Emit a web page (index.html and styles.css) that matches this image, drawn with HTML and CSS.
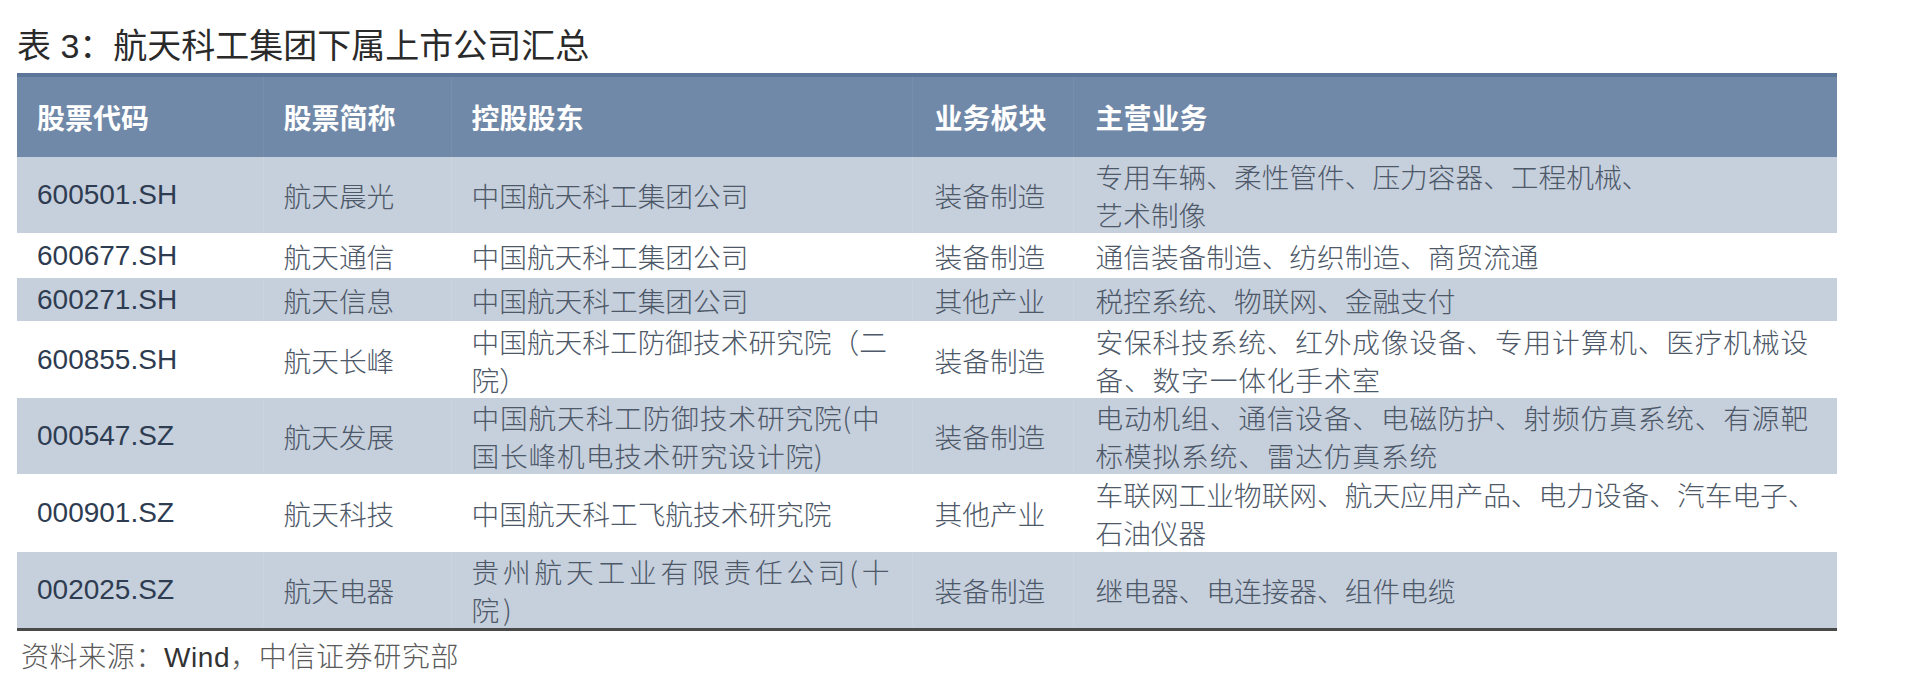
FILE: index.html
```html
<!DOCTYPE html>
<html lang="zh-CN">
<head>
<meta charset="utf-8">
<title>表 3：航天科工集团下属上市公司汇总</title>
<link rel="stylesheet" href="styles.css">
</head>
<body>
<div class="page">
  <div class="title">表 3：航天科工集团下属上市公司汇总</div>
  <table class="tbl">
    <colgroup>
      <col class="c1"><col class="c2"><col class="c3"><col class="c4"><col class="c5">
    </colgroup>
    <thead>
      <tr>
        <th>股票代码</th>
        <th>股票简称</th>
        <th>控股股东</th>
        <th class="p4">业务板块</th>
        <th class="p5">主营业务</th>
      </tr>
    </thead>
    <tbody>
      <tr class="gray h76">
        <td class="code">600501.SH</td>
        <td>航天晨光</td>
        <td>中国航天科工集团公司</td>
        <td class="p4">装备制造</td>
        <td class="p5">专用车辆、柔性管件、压力容器、工程机械、<br>艺术制像</td>
      </tr>
      <tr class="white h45">
        <td class="code">600677.SH</td>
        <td>航天通信</td>
        <td>中国航天科工集团公司</td>
        <td class="p4">装备制造</td>
        <td class="p5">通信装备制造、纺织制造、商贸流通</td>
      </tr>
      <tr class="gray h43">
        <td class="code">600271.SH</td>
        <td>航天信息</td>
        <td>中国航天科工集团公司</td>
        <td class="p4">其他产业</td>
        <td class="p5">税控系统、物联网、金融支付</td>
      </tr>
      <tr class="white h77">
        <td class="code">600855.SH</td>
        <td>航天长峰</td>
        <td>中国航天科工防御技术研究院（二<br>院）</td>
        <td class="p4">装备制造</td>
        <td class="p5 sp1">安保科技系统、红外成像设备、专用计算机、医疗机械设<br>备、数字一体化手术室</td>
      </tr>
      <tr class="gray h76">
        <td class="code">000547.SZ</td>
        <td>航天发展</td>
        <td class="sp1">中国航天科工防御技术研究院(中<br>国长峰机电技术研究设计院)</td>
        <td class="p4">装备制造</td>
        <td class="p5 sp1">电动机组、通信设备、电磁防护、射频仿真系统、有源靶<br>标模拟系统、雷达仿真系统</td>
      </tr>
      <tr class="white h78">
        <td class="code">000901.SZ</td>
        <td>航天科技</td>
        <td>中国航天科工飞航技术研究院</td>
        <td class="p4">其他产业</td>
        <td class="p5">车联网工业物联网、航天应用产品、电力设备、汽车电子、<br>石油仪器</td>
      </tr>
      <tr class="gray h75 last">
        <td class="code">002025.SZ</td>
        <td>航天电器</td>
        <td class="sp3">贵州航天工业有限责任公司(十<br>院)</td>
        <td class="p4">装备制造</td>
        <td class="p5">继电器、电连接器、组件电缆</td>
      </tr>
    </tbody>
  </table>
  <div class="source">资料来源：<span class="wind">Wind</span>，中信证券研究部</div>
</div>
</body>
</html>
```
FILE: styles.css
```css
html, body {
  margin: 0;
  padding: 0;
  background: #ffffff;
}

body {
  font-family: "Liberation Sans", "Noto Sans CJK SC", sans-serif;
  color: #333;
}

.page {
  padding: 26px 0 0 17px;
  width: 1820px;
}

.title {
  font-family: "Liberation Sans", "Noto Sans CJK SC", sans-serif;
  font-size: 34px;
  line-height: 40px;
  height: 40px;
  color: #2a2a2a;
  margin-bottom: 7px;
  white-space: nowrap;
}

.tbl {
  width: 1820px;
  border-collapse: collapse;
  table-layout: fixed;
}

.c1 { width: 246px; }
.c2 { width: 188px; }
.c3 { width: 461px; }
.c4 { width: 161px; }
.c5 { width: 764px; }

.tbl th {
  height: 80px;
  background: #7189a8;
  border-top: 4px solid #5b7698;
  color: #ffffff;
  font-family: "Noto Sans CJK SC", sans-serif;
  font-weight: bold;
  font-size: 28px;
  text-align: left;
  vertical-align: middle;
  padding: 0 0 0 20px;
  white-space: nowrap;
}

.tbl th + th {
  border-left: 1px solid rgba(255, 255, 255, 0.05);
}

.tbl td {
  font-family: "Noto Sans CJK SC", sans-serif;
  font-weight: 300;
  font-size: 27.7px;
  line-height: 38px;
  color: #4d5868;
  text-align: left;
  vertical-align: middle;
  padding: 0 0 0 20px;
  white-space: nowrap;
}

.tbl td + td {
  border-left: 1px solid rgba(255, 255, 255, 0.10);
}

.tbl .p4 { padding-left: 22px; }
.tbl .p5 { padding-left: 22px; }

.tbl td.code {
  font-family: "Liberation Sans", sans-serif;
  font-weight: normal;
  font-size: 28px;
  color: #2e3c52;
}

.sp1 { letter-spacing: 0.85px; }
.sp3 { letter-spacing: 3.8px; }

.gray td { background: #c6cfdc; }
.white td { background: #ffffff; }

.h76 { height: 76px; }
.h45 { height: 45px; }
.h43 { height: 43px; }
.h77 { height: 77px; }
.h78 { height: 78px; }
.h75 { height: 75px; }

.last td {
  border-bottom: 3px solid #4a4a4a;
}

.source {
  margin-top: 8px;
  padding-left: 4px;
  font-family: "Noto Sans CJK SC", sans-serif;
  font-weight: 300;
  font-size: 28px;
  letter-spacing: 0.6px;
  line-height: 32px;
  color: #5a5a5a;
  white-space: nowrap;
}

.source .wind {
  font-family: "Liberation Sans", sans-serif;
  font-weight: normal;
  color: #333333;
}
```
